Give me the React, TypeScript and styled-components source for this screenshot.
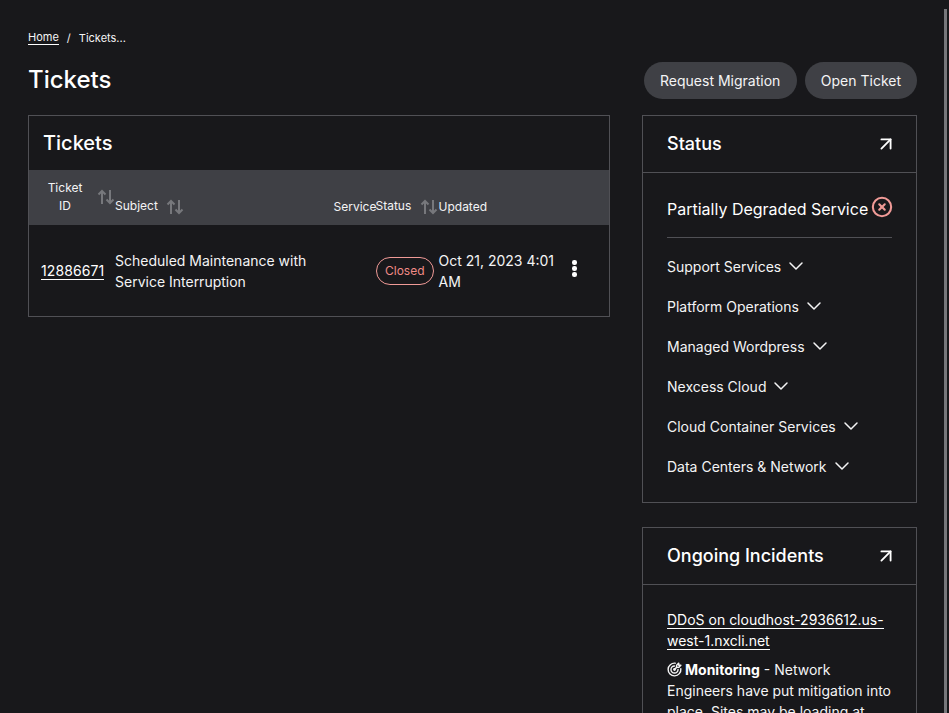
import React from 'react';
import styled, { createGlobalStyle } from 'styled-components';
import { ArrowUpRight, ChevronDown, CircleX } from 'lucide-react';
import { TbTargetArrow } from 'react-icons/tb';

const services = [
  'Support Services',
  'Platform Operations',
  'Managed Wordpress',
  'Nexcess Cloud',
  'Cloud Container Services',
  'Data Centers & Network',
];

const SortIcon = () => (
  <SortSvg width="18" height="18" viewBox="0 0 18 18" fill="none" stroke="#77787c" strokeWidth="2">
    <path d="M5 16V3M1.500 6.500 5 3l3.500 3.500" />
    <path d="M13 2v13M9.500 11.500 13 15l3.500-3.500" />
  </SortSvg>
);

const App = () => {
  return (
    <>
      <GlobalStyle />
      <Page>
        <Breadcrumb>
          <Crumb href="#">Home</Crumb>
          <Slash>/</Slash>
          <span>Tickets...</span>
        </Breadcrumb>

        <Header>
          <PageTitle>Tickets</PageTitle>
          <Actions>
            <PillButton>Request Migration</PillButton>
            <PillButton>Open Ticket</PillButton>
          </Actions>
        </Header>

        <Columns>
          <TicketsCard>
            <TicketsTitle>Tickets</TicketsTitle>
            <Table>
              <thead>
                <tr>
                  <IdHead>
                    <IdInner>
                      <IdLabel>Ticket ID</IdLabel>
                      <SortIcon />
                    </IdInner>
                  </IdHead>
                  <HeadCell>
                    Subject <SortIcon />
                  </HeadCell>
                  <HeadCell>Service</HeadCell>
                  <HeadCell>
                    Status <SortIcon />
                  </HeadCell>
                  <HeadCell>Updated</HeadCell>
                  <HeadCell />
                </tr>
              </thead>
              <tbody>
                <tr>
                  <IdCell>
                    <TicketLink href="#">12886671</TicketLink>
                  </IdCell>
                  <BodyCell>Scheduled Maintenance with Service Interruption</BodyCell>
                  <BodyCell />
                  <BodyCell>
                    <Badge>Closed</Badge>
                  </BodyCell>
                  <DateCell>Oct 21, 2023 4:01 AM</DateCell>
                  <MenuCell>
                    <Dots>
                      <i />
                      <i />
                      <i />
                    </Dots>
                  </MenuCell>
                </tr>
              </tbody>
            </Table>
          </TicketsCard>

          <Sidebar>
            <Panel>
              <PanelHeader>
                <PanelTitle>Status</PanelTitle>
                <PanelArrow size={22} color="#fff" strokeWidth={2} />
              </PanelHeader>
              <StatusBody>
                <StatusLine>
                  Partially Degraded Service
                  <StatusIcon size={22} color="#f09a97" strokeWidth={2.25} />
                </StatusLine>
                <ServiceList>
                  {services.map((name) => (
                    <ServiceRow key={name}>
                      {name}
                      <ChevronDown size={24} strokeWidth={1.5} />
                    </ServiceRow>
                  ))}
                </ServiceList>
              </StatusBody>
            </Panel>

            <Panel>
              <PanelHeader>
                <PanelTitle>Ongoing Incidents</PanelTitle>
                <PanelArrow size={22} color="#fff" strokeWidth={2} />
              </PanelHeader>
              <IncidentBody>
                <IncidentLink href="#">DDoS on cloudhost-2936612.us-west-1.nxcli.net</IncidentLink>
                <IncidentText>
                  <MonitorIcon size={17} />
                  <strong>Monitoring</strong> - Network Engineers have put mitigation into place. Sites may be loading at
                  this time.
                </IncidentText>
              </IncidentBody>
            </Panel>
          </Sidebar>
        </Columns>
        <ScrollThumb />
      </Page>
    </>
  );
};

const GlobalStyle = createGlobalStyle`
  html, body {
    margin: 0;
    height: 713px;
    overflow: hidden;
    background-color: #18181b;
  }

  body {
    font-family: Inter, "Liberation Sans", sans-serif;
    color: #fff;
  }

  * {
    box-sizing: border-box;
  }
`;

const Page = styled.div`
  position: relative;
  height: 713px;
  overflow: hidden;
  padding: 30px 32px 0 28px;
`;

const ScrollThumb = styled.div`
  position: absolute;
  top: 9px;
  right: 2px;
  bottom: 0;
  width: 3px;
  background-color: #77777b;
`;

const Breadcrumb = styled.nav`
  display: flex;
  align-items: center;
  font-size: 11px;
  line-height: 14px;
  color: #f4f4f5;
`;

const Crumb = styled.a`
  color: #f4f4f5;
  text-decoration: none;
  border-bottom: 1px solid #fff;
`;

const Slash = styled.span`
  margin: 0 8px;
`;

const Header = styled.div`
  display: flex;
  align-items: flex-start;
  justify-content: space-between;
  margin-top: 17px;
  height: 53px;
`;

const PageTitle = styled.h1`
  margin: 0;
  font-size: 24px;
  font-weight: 500;
  line-height: 36px;
`;

const Actions = styled.div`
  display: flex;
  gap: 8px;
`;

const PillButton = styled.button`
  height: 37px;
  padding: 0 16px;
  border: 0;
  border-radius: 19px;
  background-color: #3f4045;
  color: #f4f4f5;
  font-family: inherit;
  font-size: 14px;

  &:first-child {
    padding: 0 16.500px;
  }
`;

const Columns = styled.div`
  display: flex;
  justify-content: space-between;
  align-items: flex-start;
`;

const TicketsCard = styled.section`
  width: 582px;
  height: 202px;
  border: 1px solid #505055;
`;

const TicketsTitle = styled.h2`
  margin: 0;
  padding: 0 14px;
  height: 54px;
  font-size: 20px;
  font-weight: 500;
  line-height: 54px;
`;

const Table = styled.table`
  width: 580px;
  table-layout: fixed;
  border-collapse: collapse;
  font-size: 14px;

  th:nth-child(1) {
    width: 86px;
  }
  th:nth-child(2) {
    width: 218.500px;
  }
  th:nth-child(3) {
    width: 42px;
  }
  th:nth-child(4) {
    width: 63px;
  }
  th:nth-child(5) {
    width: 123px;
  }
`;

const HeadCell = styled.th`
  height: 55px;
  padding: 0;
  background-color: #3f4045;
  font-size: 12px;
  font-weight: 400;
  line-height: 18px;
  text-align: left;
  vertical-align: bottom;
  padding-bottom: 9px;
  color: #f4f4f5;
  white-space: nowrap;
`;

const IdHead = styled(HeadCell)`
  padding-bottom: 0;
  vertical-align: middle;
  white-space: normal;
`;

const IdInner = styled.div`
  display: flex;
  align-items: center;
  padding-left: 18px;
  gap: 14px;
`;

const IdLabel = styled.span`
  width: 36px;
  margin-top: -1px;
  text-align: center;
`;

const SortSvg = styled.svg`
  flex: none;
  margin-left: 5px;
  vertical-align: middle;

  ${IdInner} & {
    margin-left: 0;
    margin-top: -2px;
  }
`;

const BodyCell = styled.td`
  height: 91px;
  padding: 0 8px 0 0;
  line-height: 21px;
  vertical-align: middle;
  color: #f4f4f5;
`;

const IdCell = styled(BodyCell)`
  padding-left: 12px;
`;

const DateCell = styled(BodyCell)`
  padding-right: 0;
`;

const MenuCell = styled(BodyCell)`
  padding: 0;
`;

const TicketLink = styled.a`
  color: #fff;
  text-decoration: none;
  letter-spacing: 0.100px;
  border-bottom: 1px solid #fff;
`;

const Badge = styled.span`
  display: inline-block;
  height: 28px;
  padding: 0 8.500px;
  border: 1px solid #f09a97;
  border-radius: 14px;
  color: #f08a86;
  font-size: 12px;
  line-height: 26px;
`;

const Dots = styled.div`
  display: flex;
  flex-direction: column;
  align-items: center;
  gap: 1.500px;
  width: 14px;
  margin: -4px 0 0 6px;

  i {
    width: 4.500px;
    height: 4.500px;
    border-radius: 50%;
    background-color: #fff;
  }
`;

const Sidebar = styled.aside`
  display: flex;
  flex-direction: column;
  gap: 24px;
  width: 275px;
`;

const Panel = styled.section`
  border: 1px solid #505055;
`;

const PanelHeader = styled.div`
  display: flex;
  align-items: center;
  justify-content: space-between;
  height: 57px;
  padding: 0 24px;
  border-bottom: 1px solid #505055;
`;

const PanelTitle = styled.h3`
  margin: -2px 0 0;
  font-size: 18px;
  font-weight: 500;
`;

const PanelArrow = styled(ArrowUpRight)`
  margin-right: -5px;
`;

const StatusBody = styled.div`
  padding: 0 24px;
`;

const StatusLine = styled.div`
  display: flex;
  align-items: flex-start;
  height: 65px;
  padding-top: 25px;
  border-bottom: 1px solid #505055;
  font-size: 16px;
  line-height: 22px;
  white-space: nowrap;
`;

const StatusIcon = styled(CircleX)`
  flex: none;
  margin: -2px -6px 0 3px;
`;

const ServiceList = styled.div`
  padding: 8px 0 16px;
`;

const ServiceRow = styled.div`
  display: flex;
  align-items: center;
  gap: 3px;
  height: 40px;
  font-size: 14px;
  color: #f4f4f5;
`;

const IncidentBody = styled.div`
  padding: 24px 24px 24px;
  font-size: 14px;
  line-height: 21px;
  color: #f4f4f5;
`;

const IncidentLink = styled.a`
  color: #fff;
  text-decoration: none;
  border-bottom: 1px solid #fff;
`;

const IncidentText = styled.p`
  margin: 8px 0 0;

  strong {
    font-weight: 700;
    color: #fff;
  }
`;

const MonitorIcon = styled(TbTargetArrow)`
  margin: 0 2px 0 -1px;
  vertical-align: -3px;
`;

export default App;
